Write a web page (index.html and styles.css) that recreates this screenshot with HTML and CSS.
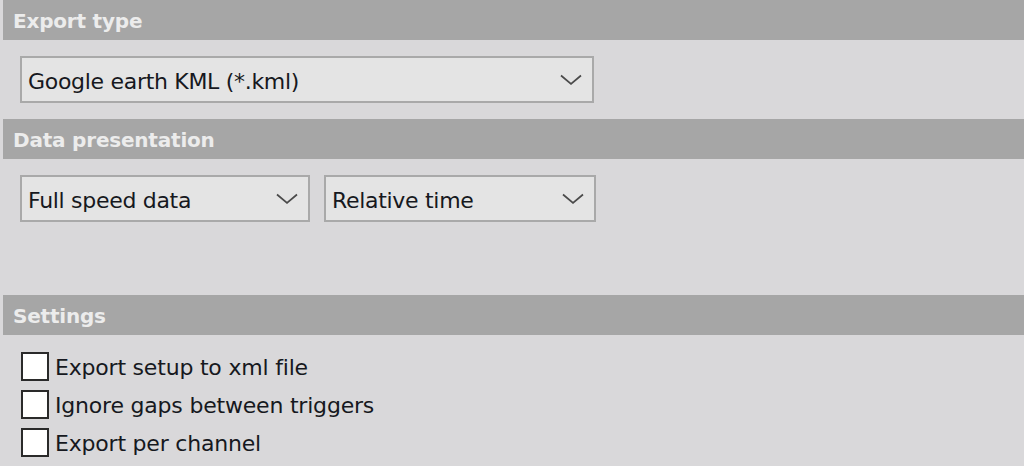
FILE: index.html
```html
<!DOCTYPE html>
<html>
<head>
<meta charset="utf-8">
<link rel="stylesheet" href="styles.css">
</head>
<body>
<div class="panel">
  <section class="sec sec-export">
    <div class="sec-head">Export type</div>
    <div class="sec-body">
      <div class="combo combo-wide">
        <span class="combo-text">Google earth KML (*.kml)</span>
        <svg class="chev" width="22" height="12" viewBox="0 0 22 12"><polyline points="1,1.5 11,10 21,1.5" fill="none" stroke="#4a4a4a" stroke-width="1.7"/></svg>
      </div>
    </div>
  </section>
  <section class="sec sec-data">
    <div class="sec-head">Data presentation</div>
    <div class="sec-body row">
      <div class="combo combo-a">
        <span class="combo-text">Full speed data</span>
        <svg class="chev" width="22" height="12" viewBox="0 0 22 12"><polyline points="1,1.5 11,10 21,1.5" fill="none" stroke="#4a4a4a" stroke-width="1.7"/></svg>
      </div>
      <div class="combo combo-b">
        <span class="combo-text">Relative time</span>
        <svg class="chev" width="22" height="12" viewBox="0 0 22 12"><polyline points="1,1.5 11,10 21,1.5" fill="none" stroke="#4a4a4a" stroke-width="1.7"/></svg>
      </div>
    </div>
  </section>
  <section class="sec sec-settings">
    <div class="sec-head">Settings</div>
    <div class="sec-body checks">
      <label class="check"><span class="box"></span><span class="check-text">Export setup to xml file</span></label>
      <label class="check"><span class="box"></span><span class="check-text">Ignore gaps between triggers</span></label>
      <label class="check"><span class="box"></span><span class="check-text">Export per channel</span></label>
    </div>
  </section>
</div>
</body>
</html>
```

FILE: styles.css
```css
html, body {
  margin: 0;
  padding: 0;
  background: #d9d8da;
  width: 1024px;
  height: 466px;
  overflow: hidden;
}
.panel {
  font-family: "DejaVu Sans", Verdana, sans-serif;
  color: #161820;
}
.sec-head {
  margin-left: 3px;
  height: 40px;
  box-sizing: border-box;
  background: #a6a6a6;
  color: #ececec;
  font-weight: bold;
  font-size: 20px;
  line-height: 42px;
  padding-left: 10px;
  letter-spacing: -0.2px;
}
.sec-export .sec-body {
  padding: 16px 0 16px 20px;
  height: 79px;
  box-sizing: border-box;
}
.sec-data .sec-body {
  padding: 16px 0 0 20px;
  height: 136px;
  box-sizing: border-box;
}
.sec-settings .sec-body {
  padding: 17px 0 0 21px;
}
.row {
  display: flex;
  gap: 14px;
  align-items: flex-start;
}
.combo {
  display: flex;
  align-items: center;
  justify-content: space-between;
  height: 47px;
  box-sizing: border-box;
  border: 2px solid #a9a9a9;
  background: #e4e4e4;
  padding: 0 10px 0 6px;
  font-size: 22px;
  letter-spacing: -0.3px;
}
.combo-text { padding-top: 3px; }
.combo-wide { width: 574px; }
.combo-a { width: 290px; }
.combo-b { width: 272px; }
.chev { display: block; flex: none; }
.checks {
  display: flex;
  flex-direction: column;
  gap: 9px;
}
.check {
  display: flex;
  align-items: center;
  gap: 6px;
  height: 29px;
  font-size: 22px;
  letter-spacing: -0.2px;
}
.check-text { padding-top: 1px; }
.box {
  width: 28px;
  height: 29px;
  box-sizing: border-box;
  border: 2px solid #2a2a2a;
  background: #ffffff;
  flex: none;
}
```
